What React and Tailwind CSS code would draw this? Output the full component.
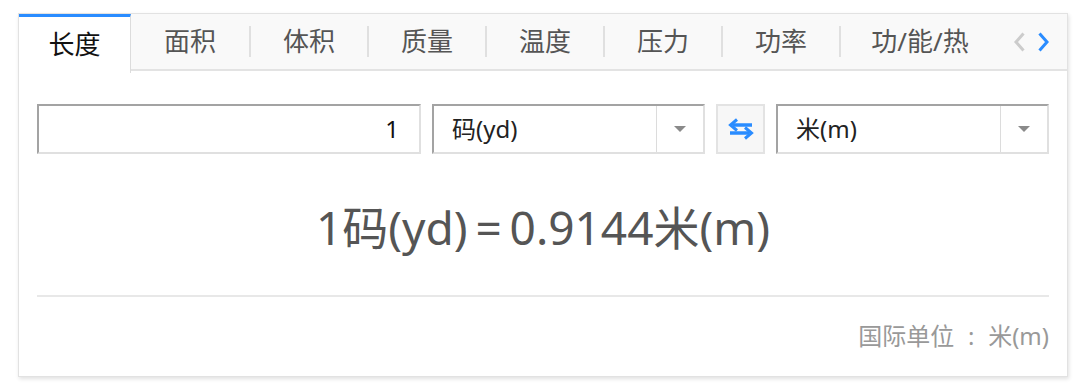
import React from 'react'

const tabs = ['面积', '体积', '质量', '温度', '压力', '功率']

const font = { fontFamily: '"Noto Sans", "Noto Sans CJK SC", sans-serif' }

const Caret = () => (
  <svg width="14" height="8" viewBox="0 0 14 8">
    <path d="M1 1 L13 1 L7 7 Z" fill="#8a8a8a" />
  </svg>
)

const UnitSelect = ({ label }) => (
  <div className="flex h-[50px] w-[273px] border-2 border-t-[#a3a3a3] border-l-[#a3a3a3] border-r-[#e0e0e0] border-b-[#e0e0e0] bg-white">
    <div className="flex flex-1 items-center pl-[18px] text-[24px] text-[#222]">{label}</div>
    <div className="flex w-[47px] items-center justify-center border-l border-[#dcdcdc]">
      <Caret />
    </div>
  </div>
)

export default function App() {
  return (
    <div className="h-[386px] w-[1080px] bg-white pl-[18px] pt-[13px]" style={font}>
      <div className="flex h-[364px] w-[1050px] flex-col border border-[#e2e2e2] bg-white shadow-[1px_2px_4px_rgba(0,0,0,0.12)]">
        <div className="flex h-[57px] border-b-2 border-[#e3e3e3] bg-[#f9f9f9]">
          <div className="-mb-[2px] flex h-[59px] w-[112px] items-center justify-center border-r border-t-[3px] border-r-[#dcdcdc] border-t-[#2a8cff] bg-white pb-[1px] text-[26px] text-[#111]">
            长度
          </div>
          {tabs.map((t, i) => (
            <div key={t} className="flex h-full w-[118px] items-center">
              {i > 0 && <div className="h-[31px] w-[2px] bg-[#e0e0e0]" />}
              <div className="flex flex-1 items-center justify-center pb-[1px] text-[26px] text-[#555]">{t}</div>
            </div>
          ))}
          <div className="flex h-full w-[160px] items-center">
            <div className="h-[31px] w-[2px] bg-[#e0e0e0]" />
            <div className="flex flex-1 items-center justify-center pb-[1px] text-[26px] text-[#555]">功/能/热</div>
          </div>
          <div className="ml-auto flex items-center gap-[13px] pr-[18px]">
            <svg width="11" height="20" viewBox="0 0 11 20">
              <path d="M9.5 1.5 L2 10 L9.5 18.5" stroke="#cccccc" strokeWidth="3" fill="none" />
            </svg>
            <svg width="11" height="20" viewBox="0 0 11 20">
              <path d="M1.5 1.5 L9 10 L1.5 18.5" stroke="#2a8cff" strokeWidth="3" fill="none" />
            </svg>
          </div>
        </div>

        <div className="flex flex-1 flex-col px-[18px] pt-[33px]">
          <div className="flex gap-[11px]">
            <div className="flex h-[50px] w-[384px] items-center justify-end border-2 border-t-[#a3a3a3] border-l-[#a3a3a3] border-r-[#e0e0e0] border-b-[#e0e0e0] bg-white pr-[20px] text-[24px] text-[#111]">
              1
            </div>
            <UnitSelect label="码(yd)" />
            <div className="flex h-[50px] w-[49px] items-center justify-center border-2 border-[#e3e3e3] bg-[#f7f7f7]">
              <svg width="26" height="22" viewBox="0 0 26 22">
                <path d="M24 7 L5 7" stroke="#2a8cff" strokeWidth="3.5" fill="none" />
                <path d="M9 1.5 L2.5 7 L9 12.5" stroke="#2a8cff" strokeWidth="3" fill="none" />
                <path d="M2 15 L21 15" stroke="#2a8cff" strokeWidth="3.5" fill="none" />
                <path d="M17 9.5 L23.5 15 L17 20.5" stroke="#2a8cff" strokeWidth="3" fill="none" />
              </svg>
            </div>
            <UnitSelect label="米(m)" />
          </div>

          <div className="flex h-[143px] items-center justify-center border-b-2 border-[#e8e8e8] pt-[6px] text-[46px] text-[#555]">
            1码(yd)<span className="inline-block w-[42px] text-center">=</span>0.9144米(m)
          </div>

          <div className="flex flex-1 items-center justify-end pb-[2px] text-[24px] text-[#999]">
            国际单位<span className="inline-block w-[34px] text-center">:</span>米(m)
          </div>
        </div>
      </div>
    </div>
  )
}
